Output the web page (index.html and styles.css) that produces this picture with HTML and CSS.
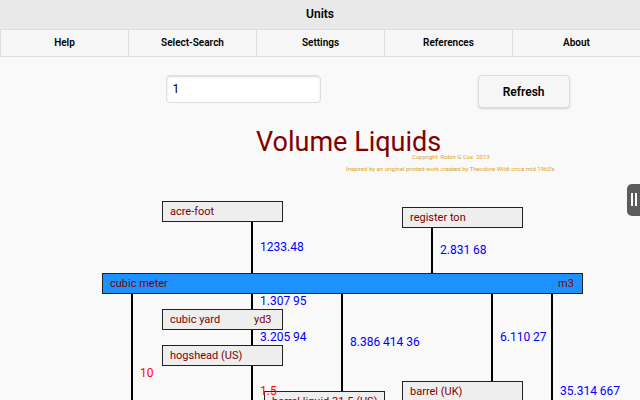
FILE: index.html
```html
<!DOCTYPE html>
<html lang="en">
<head>
<meta charset="utf-8">
<title>Units</title>
<link rel="stylesheet" href="styles.css">
</head>
<body>
<header class="titlebar"><h1>Units</h1></header>
<nav class="tabs">
  <a href="#help">Help</a>
  <a href="#select">Select-Search</a>
  <a href="#settings">Settings</a>
  <a href="#references">References</a>
  <a href="#about">About</a>
</nav>
<main class="page">
  <form class="controls">
    <input class="amount" type="text" value="1" aria-label="Amount">
    <button class="refresh" type="button">Refresh</button>
  </form>
  <svg class="diagram" viewBox="0 110 640 290" role="img" aria-label="Volume Liquids conversion diagram">
    <text class="heading" x="256" y="151">Volume Liquids</text>
    <text class="credit" x="412" y="159" xml:space="preserve">Copyright  Robin G Cox  2013</text>
    <text class="credit" x="346" y="171">Inspired by an original printed work created by Theodore Wildi circa mid 1960's</text>

    <g class="link">
      <path d="M252 220V400M432 226V273M132 293V400M342 293V392M492 293V382M552 293V400"/>
    </g>

    <g class="unit">
      <rect x="162" y="201" width="120" height="20"/>
      <rect x="402" y="207" width="120" height="20"/>
      <rect class="base" x="102" y="273" width="480" height="20"/>
      <rect x="162" y="309" width="120" height="20"/>
      <rect x="162" y="345" width="120" height="20"/>
      <rect x="264" y="391" width="120" height="20"/>
      <rect x="402" y="381" width="120" height="20"/>
    </g>

    <g class="name">
      <text x="170" y="215">acre-foot</text>
      <text x="410" y="221">register ton</text>
      <text x="110" y="287">cubic meter</text>
      <text x="558" y="287">m3</text>
      <text x="170" y="323">cubic yard</text>
      <text x="254" y="323">yd3</text>
      <text x="170" y="359">hogshead (US)</text>
      <text x="272" y="405">barrel liquid 31.5 (US)</text>
      <text x="410" y="395">barrel (UK)</text>
    </g>

    <g class="factor">
      <text x="260" y="251">1233.48</text>
      <text x="440" y="254">2.831 68</text>
      <text x="260" y="305">1.307 95</text>
      <text x="260" y="341">3.205 94</text>
      <text x="350" y="346">8.386 414 36</text>
      <text x="500" y="341">6.110 27</text>
      <text x="560" y="395">35.314 667</text>
      <text class="exact" x="140" y="377">10</text>
      <text class="exact" x="260" y="395">1.5</text>
    </g>
  </svg>
</main>
<button class="drawer" type="button" aria-label="Open panel"><span></span><span></span></button>
</body>
</html>
```
FILE: styles.css
```css
* {
  box-sizing: border-box;
}

body {
  margin: 0;
  min-height: 100vh;
  overflow: hidden;
  background: #f9f9f9;
  color: #000;
  font-family: Roboto, "Liberation Sans", sans-serif;
}

.titlebar {
  height: 30px;
  border-bottom: 1px solid #dcdcdc;
  background: #e9e9e9;
  text-align: center;
}

.titlebar h1 {
  margin: 0;
  font-size: 12px;
  font-weight: 600;
  line-height: 28px;
}

.tabs {
  display: grid;
  grid-template-columns: repeat(5, 1fr);
  border-bottom: 1px solid #ddd;
  background: #f6f6f6;
}

.tabs a {
  border-left: 1px solid #ddd;
  color: #000;
  font-size: 10px;
  font-weight: 600;
  line-height: 26px;
  text-align: center;
  text-decoration: none;
}

.controls {
  display: flex;
  justify-content: space-between;
  align-items: flex-start;
  height: 53px;
  padding: 18px 11% 0 26%;
}

.amount {
  width: 155px;
  height: 28px;
  padding: 0 5px;
  border: 1px solid #ddd;
  border-radius: 4px;
  background: #fff;
  box-shadow: inset 0 1px 2px rgba(0, 0, 0, 0.15);
  color: #000;
  font: 12px Roboto, "Liberation Sans", sans-serif;
}

.refresh {
  width: 92px;
  height: 33px;
  padding: 0;
  border: 1px solid #ddd;
  border-radius: 4px;
  background: #f6f6f6;
  box-shadow: 0 1px 2px rgba(0, 0, 0, 0.15);
  color: #000;
  font: 600 12px Roboto, "Liberation Sans", sans-serif;
}

.diagram {
  display: block;
  width: 100%;
}

.heading {
  fill: #800000;
  font-size: 27px;
}

.credit {
  fill: #daa520;
  font-size: 6px;
}

.link path {
  fill: none;
  stroke: #000;
  stroke-width: 2px;
}

.unit rect {
  fill: #eee;
  stroke: #222;
  stroke-width: 1px;
  shape-rendering: crispEdges;
}

.unit .base {
  fill: #1e90ff;
}

.name text {
  fill: #800000;
  font-size: 11px;
}

.factor text {
  fill: #00f;
  font-size: 12px;
}

.factor .exact {
  fill: #f00;
}

.drawer {
  position: fixed;
  top: 46%;
  right: -6px;
  display: flex;
  gap: 2px;
  width: 19px;
  height: 32px;
  padding: 9px 4px;
  border: 0;
  border-radius: 5px;
  background: #5c5c5c;
}

.drawer span {
  width: 2px;
  height: 13px;
  background: #fff;
}
```
